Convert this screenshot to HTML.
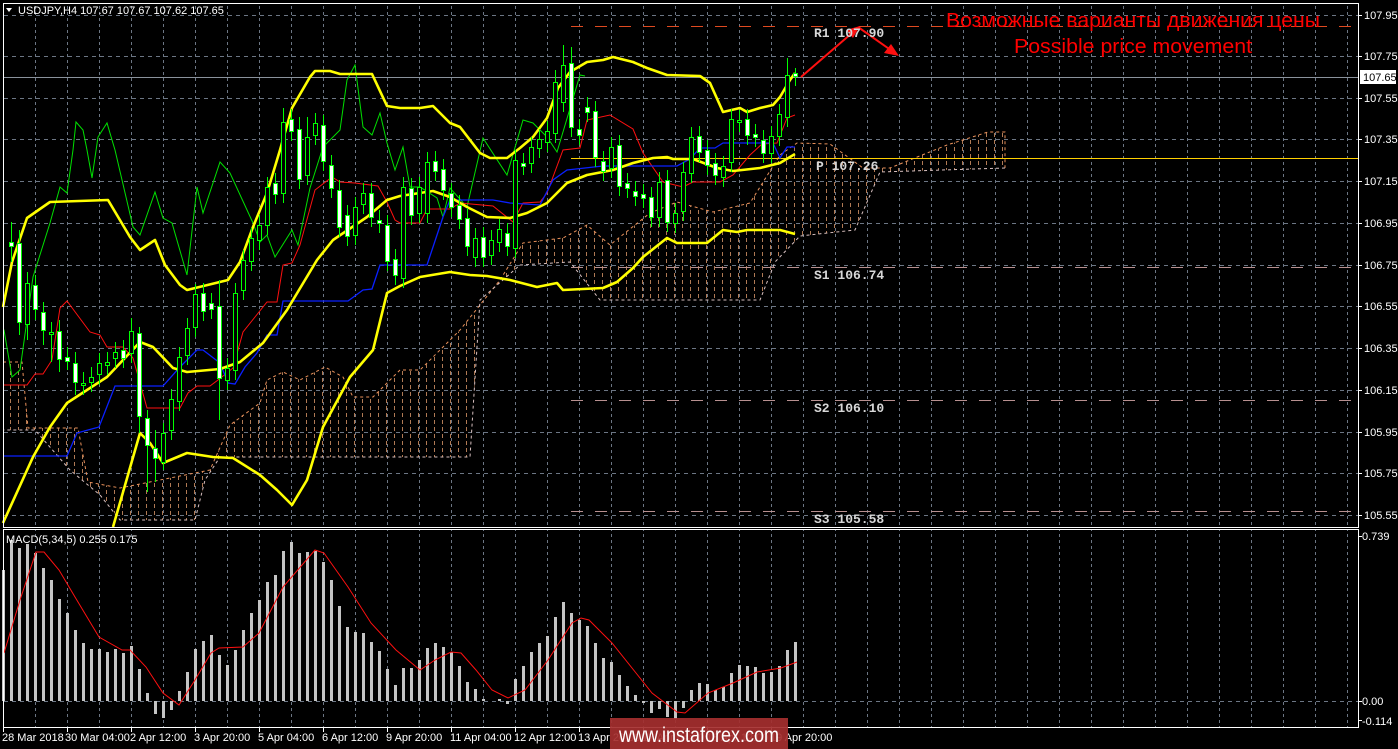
<!DOCTYPE html>
<html><head><meta charset="utf-8"><style>
html,body{margin:0;padding:0;background:#000;width:1398px;height:749px;overflow:hidden}
svg{display:block}
text{font-family:"Liberation Sans",sans-serif}
</style></head><body>
<svg width="1398" height="749" viewBox="0 0 1398 749" xmlns="http://www.w3.org/2000/svg">
<defs>
<pattern id="vg" x="3" y="0" width="32" height="6" patternUnits="userSpaceOnUse">
<rect x="0" y="0" width="1" height="3" fill="#6c7684"/></pattern>
<pattern id="hatch" x="0" y="0" width="8" height="7" patternUnits="userSpaceOnUse">
<rect x="2" y="0" width="1" height="4" fill="#b07a55"/></pattern>
</defs>
<rect width="1398" height="749" fill="#000"/>
<rect x="4" y="4" width="1354" height="523" fill="url(#vg)"/>
<rect x="4" y="530" width="1354" height="197" fill="url(#vg)"/>
<g stroke="#6c7684" stroke-width="1" stroke-dasharray="4,4">
<path d="M4 15.5H1358M4 56.5H1358M4 98.5H1358M4 139.5H1358M4 181.5H1358M4 223.5H1358M4 265.5H1358M4 306.5H1358M4 348.5H1358M4 390.5H1358M4 432.5H1358M4 473.5H1358M4 515.5H1358M4 701.5H1358"/>
</g>
<polygon points="3,362 22,362 28,428 78,428 88,482 120,488 210,470 230,425 260,403 267,380 283,372 300,380 325,367 343,377 353,397 373,397 400,370 420,370 460,330 500,280 523,243 563,238 587,225 610,245 650,213 677,202 713,212 750,203 780,155 797,143 830,144 863,168 890,168 947,145 988,132 1005,132 1005,168 880,172 855,230 800,236 775,262 760,300 600,300 570,262 520,265 480,300 470,457 220,457 205,480 195,520 120,520 100,495 70,470 35,430 3,430" fill="url(#hatch)"/>
<polyline fill="none" stroke="#e8905a" stroke-width="1" stroke-dasharray="3,3" points="3,362 22,362 28,428 78,428 88,482 120,488 210,470 230,425 260,403 267,380 283,372 300,380 325,367 343,377 353,397 373,397 400,370 420,370 460,330 500,280 523,243 563,238 587,225 610,245 650,213 677,202 713,212 750,203 780,155 797,143 830,144 863,168 890,168 947,145 988,132 1005,132 1005,168"/>
<polyline fill="none" stroke="#d8c0c0" stroke-width="1" stroke-dasharray="3,3" points="1005,168 880,172 855,230 800,236 775,262 760,300 600,300 570,262 520,265 480,300 470,457 220,457 205,480 195,520 120,520 100,495 70,470 35,430 3,430"/>
<line x1="4" y1="77.5" x2="1358" y2="77.5" stroke="#8a929c" stroke-width="1"/>
<line x1="571" y1="158.5" x2="1358" y2="158.5" stroke="#ffd000" stroke-width="1"/>
<g stroke-width="1" stroke-dasharray="12,12">
<line x1="571" y1="26.5" x2="1358" y2="26.5" stroke="#e04a20"/>
<line x1="571" y1="267.5" x2="1358" y2="267.5" stroke="#b89090"/>
<line x1="571" y1="400.5" x2="1358" y2="400.5" stroke="#b89090"/>
<line x1="571" y1="511.5" x2="1358" y2="511.5" stroke="#b89090"/>
</g>
<polyline fill="none" stroke="#00e000" stroke-width="1" points="3,330 4,330 12,377 20,370 33,277 50,223 60,187 67,193 73,150 76,122 83,130 87,150 92,178 98,137 107,123 115,150 133,227 140,235 155,192 163,218 172,223 187,275 197,187 203,213 220,162 230,173 253,223 260,242 267,235 275,257 292,230 298,245 310,188 323,147 340,130 347,80 355,65 363,127 372,135 380,113 387,143 395,170 403,147 410,187 420,187 437,198 443,217 450,188 467,207 483,138 507,175 523,120 533,123 547,137 557,152 580,75 585,76"/>
<polyline fill="none" stroke="#ff1010" stroke-width="1" points="3,385 27,385 35,374 43,374 52,360 60,308 67,301 90,332 100,335 107,347 123,347 133,358 147,408 180,408 188,393 197,386 210,386 218,380 233,368 243,332 267,302 277,302 283,265 292,263 300,245 315,190 332,177 340,182 355,183 378,186 387,202 395,220 400,223 420,223 427,209 450,209 460,203 493,206 513,222 523,203 540,202 547,193 563,150 580,148 587,120 610,115 633,129 643,153 663,182 683,187 693,182 720,182 733,175 750,155 762,144 777,143 787,118 795,115"/>
<polyline fill="none" stroke="#0a20ff" stroke-width="1.3" points="3,456 67,456 77,433 99,427 115,386 163,386 180,367 197,350 203,350 220,363 228,383 235,384 245,367 257,353 267,335 277,335 283,301 348,301 363,290 372,289 380,265 427,265 443,217 450,200 493,200 510,203 540,205 553,180 567,170 603,166 677,166 690,159 700,148 715,148 723,143 773,143 780,158 787,147 795,147"/>
<g fill="none" stroke="#ffff00" stroke-width="2.6" stroke-linejoin="round">
<polyline points="3,307 12,262 27,218 50,202 108,200 130,237 140,250 155,240 165,265 180,285 187,290 228,280 240,262 253,227 267,193 280,150 292,108 310,77 315,71 330,71 340,74 372,74 387,106 400,108 420,108 433,106 450,123 460,127 480,153 490,158 507,158 520,148 533,137 547,118 558,88 570,72 587,62 603,60 613,57 633,62 647,68 667,75 700,76 710,83 723,112 740,108 747,112 760,108 773,105 780,97 790,80 795,73"/>
<polyline points="3,523 33,457 50,427 67,403 107,377 140,342 153,347 173,368 187,372 220,369 240,362 263,343 287,310 317,260 333,240 367,217 387,200 400,196 433,191 450,197 467,207 487,217 510,218 527,213 547,203 567,183 587,175 613,170 633,163 653,158 667,157 673,159 693,159 717,168 733,171 760,168 780,163 795,154"/>
<polyline points="113,527 140,433 150,443 163,463 187,453 213,457 233,458 260,475 277,490 292,505 307,480 323,427 350,377 373,350 387,293 400,286 420,277 450,272 470,275 487,276 510,280 537,287 557,283 563,290 603,288 617,282 633,268 643,257 667,238 677,243 707,243 723,230 737,232 747,230 780,230 795,234"/>
</g>
<path stroke="#00ff00" stroke-width="1" fill="none" d="M11.5 222V262M19.5 230V335M27.5 272V340M35.5 275V320M43.5 302V345M51.5 322V362M59.5 320V372M67.5 347V370M75.5 352V395M83.5 372V395M91.5 367V392M99.5 353V385M107.5 352V375M115.5 342V368M123.5 340V368M131.5 318V363M139.5 327V433M147.5 410V492M155.5 430V482M163.5 423V470M171.5 389V440M179.5 347V411M187.5 318V365M195.5 284V337M203.5 283V321M211.5 293V319M219.5 280V420M227.5 358V390M235.5 283V380M243.5 250V300M251.5 228V271M259.5 215V250M267.5 177V235M275.5 173V204M283.5 108V203M291.5 109V141M299.5 117V189M307.5 117V185M315.5 113V145M323.5 115V171M331.5 155V198M339.5 180V237M347.5 205V246M355.5 197V245M363.5 183V214M371.5 183V227M379.5 210V233M387.5 215V271M395.5 249V285M403.5 177V288M411.5 178V225M419.5 177V223M427.5 152V223M435.5 151V181M443.5 159V200M451.5 183V217M459.5 195V229M467.5 208V256M475.5 228V267M483.5 227V267M491.5 230V265M499.5 219V252M507.5 223V256M515.5 150V258M523.5 153V175M531.5 137V173M539.5 129V158M547.5 121V152M555.5 70V143M563.5 45V112M571.5 47V137M579.5 119V145M587.5 97V122M595.5 101V167M603.5 151V181M611.5 137V178M619.5 135V196M627.5 173V198M635.5 181V206M643.5 184V208M651.5 187V227M659.5 172V227M667.5 170V232M675.5 203V233M683.5 162V221M691.5 127V183M699.5 126V162M707.5 140V175M715.5 153V185M723.5 156V187M731.5 109V172M739.5 110V132M747.5 109V145M755.5 124V147M763.5 130V163M771.5 126V163M779.5 104V146M787.5 58V127M795.5 68V86"/>
<g fill="#000" stroke="#00ff00" stroke-width="1">
<rect x="25.5" y="283.5" width="4" height="41"/><rect x="49.5" y="332.5" width="4" height="2"/><rect x="81.5" y="383.5" width="4" height="2"/><rect x="89.5" y="377.5" width="4" height="5"/><rect x="97.5" y="363.5" width="4" height="11"/><rect x="105.5" y="362.5" width="4" height="3"/><rect x="113.5" y="352.5" width="4" height="6"/><rect x="129.5" y="331.5" width="4" height="22"/><rect x="161.5" y="433.5" width="4" height="29"/><rect x="169.5" y="399.5" width="4" height="31"/><rect x="177.5" y="357.5" width="4" height="44"/><rect x="185.5" y="328.5" width="4" height="27"/><rect x="193.5" y="294.5" width="4" height="33"/><rect x="225.5" y="368.5" width="4" height="12"/><rect x="233.5" y="293.5" width="4" height="77"/><rect x="241.5" y="260.5" width="4" height="30"/><rect x="249.5" y="238.5" width="4" height="23"/><rect x="257.5" y="225.5" width="4" height="15"/><rect x="265.5" y="187.5" width="4" height="38"/><rect x="281.5" y="122.5" width="4" height="71"/><rect x="305.5" y="137.5" width="4" height="38"/><rect x="313.5" y="123.5" width="4" height="12"/><rect x="353.5" y="207.5" width="4" height="28"/><rect x="361.5" y="193.5" width="4" height="11"/><rect x="401.5" y="187.5" width="4" height="91"/><rect x="417.5" y="187.5" width="4" height="26"/><rect x="425.5" y="162.5" width="4" height="51"/><rect x="473.5" y="238.5" width="4" height="19"/><rect x="489.5" y="240.5" width="4" height="15"/><rect x="497.5" y="229.5" width="4" height="13"/><rect x="513.5" y="160.5" width="4" height="88"/><rect x="529.5" y="147.5" width="4" height="16"/><rect x="537.5" y="139.5" width="4" height="9"/><rect x="545.5" y="131.5" width="4" height="11"/><rect x="553.5" y="82.5" width="4" height="51"/><rect x="561.5" y="65.5" width="4" height="37"/><rect x="609.5" y="147.5" width="4" height="21"/><rect x="657.5" y="182.5" width="4" height="35"/><rect x="673.5" y="213.5" width="4" height="10"/><rect x="681.5" y="172.5" width="4" height="39"/><rect x="689.5" y="137.5" width="4" height="36"/><rect x="721.5" y="166.5" width="4" height="11"/><rect x="729.5" y="119.5" width="4" height="43"/><rect x="737.5" y="120.5" width="4" height="2"/><rect x="769.5" y="136.5" width="4" height="17"/><rect x="777.5" y="114.5" width="4" height="22"/><rect x="785.5" y="75.5" width="4" height="42"/>
</g>
<g fill="#fff" stroke="#00ff00" stroke-width="1">
<rect x="9.5" y="242.5" width="4" height="4"/><rect x="17.5" y="243.5" width="4" height="79"/><rect x="33.5" y="285.5" width="4" height="24"/><rect x="41.5" y="312.5" width="4" height="18"/><rect x="57.5" y="331.5" width="4" height="28"/><rect x="65.5" y="357.5" width="4" height="4"/><rect x="73.5" y="363.5" width="4" height="19"/><rect x="121.5" y="350.5" width="4" height="8"/><rect x="137.5" y="333.5" width="4" height="83"/><rect x="145.5" y="418.5" width="4" height="27"/><rect x="153.5" y="448.5" width="4" height="10"/><rect x="201.5" y="293.5" width="4" height="18"/><rect x="209.5" y="303.5" width="4" height="6"/><rect x="217.5" y="306.5" width="4" height="72"/><rect x="273.5" y="183.5" width="4" height="11"/><rect x="289.5" y="119.5" width="4" height="12"/><rect x="297.5" y="129.5" width="4" height="50"/><rect x="321.5" y="125.5" width="4" height="36"/><rect x="329.5" y="165.5" width="4" height="23"/><rect x="337.5" y="190.5" width="4" height="37"/><rect x="345.5" y="215.5" width="4" height="21"/><rect x="369.5" y="193.5" width="4" height="24"/><rect x="377.5" y="220.5" width="4" height="3"/><rect x="385.5" y="225.5" width="4" height="36"/><rect x="393.5" y="259.5" width="4" height="16"/><rect x="409.5" y="188.5" width="4" height="27"/><rect x="433.5" y="161.5" width="4" height="10"/><rect x="441.5" y="169.5" width="4" height="21"/><rect x="449.5" y="193.5" width="4" height="14"/><rect x="457.5" y="205.5" width="4" height="14"/><rect x="465.5" y="218.5" width="4" height="28"/><rect x="481.5" y="237.5" width="4" height="20"/><rect x="505.5" y="233.5" width="4" height="13"/><rect x="521.5" y="163.5" width="4" height="3"/><rect x="569.5" y="63.5" width="4" height="64"/><rect x="577.5" y="129.5" width="4" height="6"/><rect x="585.5" y="107.5" width="4" height="5"/><rect x="593.5" y="111.5" width="4" height="46"/><rect x="601.5" y="161.5" width="4" height="10"/><rect x="617.5" y="145.5" width="4" height="41"/><rect x="625.5" y="183.5" width="4" height="5"/><rect x="633.5" y="191.5" width="4" height="5"/><rect x="641.5" y="194.5" width="4" height="4"/><rect x="649.5" y="197.5" width="4" height="20"/><rect x="665.5" y="180.5" width="4" height="42"/><rect x="697.5" y="136.5" width="4" height="16"/><rect x="705.5" y="150.5" width="4" height="15"/><rect x="713.5" y="163.5" width="4" height="12"/><rect x="745.5" y="119.5" width="4" height="16"/><rect x="753.5" y="134.5" width="4" height="3"/><rect x="761.5" y="140.5" width="4" height="13"/><rect x="793.5" y="73.5" width="4" height="3"/>
</g>
<g stroke="#ff1010" stroke-width="2" fill="#ff1010">
<line x1="801" y1="77" x2="852" y2="33"/>
<polygon points="860,26 846,30 853,38" stroke="none"/>
<line x1="858" y1="27" x2="892" y2="51"/>
<polygon points="899,56 884,53 891,44" stroke="none"/>
</g>
<g font-weight="bold" font-size="13" fill="#d8d8d8">
<text x="814" y="37" style="font-family:'Liberation Mono',monospace">R1 107.90</text>
<text x="816" y="170" style="font-family:'Liberation Mono',monospace">P 107.26</text>
<text x="814" y="279" style="font-family:'Liberation Mono',monospace">S1 106.74</text>
<text x="814" y="412" style="font-family:'Liberation Mono',monospace">S2 106.10</text>
<text x="814" y="523" style="font-family:'Liberation Mono',monospace">S3 105.58</text>
</g>
<text x="946" y="27" font-size="20" fill="#ff0000" textLength="374" lengthAdjust="spacingAndGlyphs">Возможные варианты движения цены</text>
<text x="1014" y="53" font-size="20" fill="#ff0000" textLength="238" lengthAdjust="spacingAndGlyphs">Possible price movement</text>
<g fill="#c4c4c4">
<rect x="2" y="570" width="3" height="131"/><rect x="10" y="540" width="3" height="161"/><rect x="18" y="548" width="3" height="153"/><rect x="26" y="544" width="3" height="157"/><rect x="34" y="553" width="3" height="148"/><rect x="42" y="568" width="3" height="133"/><rect x="50" y="580" width="3" height="121"/><rect x="58" y="599" width="3" height="102"/><rect x="66" y="613" width="3" height="88"/><rect x="74" y="630" width="3" height="71"/><rect x="82" y="643" width="3" height="58"/><rect x="90" y="649" width="3" height="52"/><rect x="98" y="649" width="3" height="52"/><rect x="106" y="652" width="3" height="49"/><rect x="114" y="649" width="3" height="52"/><rect x="122" y="653" width="3" height="48"/><rect x="130" y="646" width="3" height="55"/><rect x="138" y="669" width="3" height="32"/><rect x="146" y="693" width="3" height="8"/><rect x="154" y="701" width="3" height="13"/><rect x="162" y="701" width="3" height="17"/><rect x="170" y="701" width="3" height="9"/><rect x="178" y="691" width="3" height="10"/><rect x="186" y="672" width="3" height="29"/><rect x="194" y="649" width="3" height="52"/><rect x="202" y="641" width="3" height="60"/><rect x="210" y="635" width="3" height="66"/><rect x="218" y="655" width="3" height="46"/><rect x="226" y="665" width="3" height="36"/><rect x="234" y="650" width="3" height="51"/><rect x="242" y="630" width="3" height="71"/><rect x="250" y="613" width="3" height="88"/><rect x="258" y="600" width="3" height="101"/><rect x="266" y="582" width="3" height="119"/><rect x="274" y="575" width="3" height="126"/><rect x="282" y="551" width="3" height="150"/><rect x="290" y="542" width="3" height="159"/><rect x="298" y="553" width="3" height="148"/><rect x="306" y="552" width="3" height="149"/><rect x="314" y="551" width="3" height="150"/><rect x="322" y="562" width="3" height="139"/><rect x="330" y="580" width="3" height="121"/><rect x="338" y="606" width="3" height="95"/><rect x="346" y="627" width="3" height="74"/><rect x="354" y="632" width="3" height="69"/><rect x="362" y="633" width="3" height="68"/><rect x="370" y="642" width="3" height="59"/><rect x="378" y="651" width="3" height="50"/><rect x="386" y="669" width="3" height="32"/><rect x="394" y="685" width="3" height="16"/><rect x="402" y="668" width="3" height="33"/><rect x="410" y="668" width="3" height="33"/><rect x="418" y="660" width="3" height="41"/><rect x="426" y="648" width="3" height="53"/><rect x="434" y="643" width="3" height="58"/><rect x="442" y="647" width="3" height="54"/><rect x="450" y="652" width="3" height="49"/><rect x="458" y="666" width="3" height="35"/><rect x="466" y="682" width="3" height="19"/><rect x="474" y="689" width="3" height="12"/><rect x="482" y="699" width="3" height="2"/><rect x="498" y="699" width="3" height="2"/><rect x="506" y="701" width="3" height="3"/><rect x="514" y="679" width="3" height="22"/><rect x="522" y="666" width="3" height="35"/><rect x="530" y="652" width="3" height="49"/><rect x="538" y="643" width="3" height="58"/><rect x="546" y="636" width="3" height="65"/><rect x="554" y="617" width="3" height="84"/><rect x="562" y="602" width="3" height="99"/><rect x="570" y="613" width="3" height="88"/><rect x="578" y="620" width="3" height="81"/><rect x="586" y="626" width="3" height="75"/><rect x="594" y="643" width="3" height="58"/><rect x="602" y="658" width="3" height="43"/><rect x="610" y="662" width="3" height="39"/><rect x="618" y="675" width="3" height="26"/><rect x="626" y="686" width="3" height="15"/><rect x="634" y="695" width="3" height="6"/><rect x="642" y="701" width="3" height="2"/><rect x="650" y="701" width="3" height="12"/><rect x="658" y="701" width="3" height="8"/><rect x="666" y="701" width="3" height="16"/><rect x="674" y="701" width="3" height="18"/><rect x="682" y="701" width="3" height="7"/><rect x="690" y="690" width="3" height="11"/><rect x="698" y="683" width="3" height="18"/><rect x="706" y="684" width="3" height="17"/><rect x="714" y="690" width="3" height="11"/><rect x="722" y="687" width="3" height="14"/><rect x="730" y="673" width="3" height="28"/><rect x="738" y="665" width="3" height="36"/><rect x="746" y="666" width="3" height="35"/><rect x="754" y="667" width="3" height="34"/><rect x="762" y="673" width="3" height="28"/><rect x="770" y="672" width="3" height="29"/><rect x="778" y="666" width="3" height="35"/><rect x="786" y="650" width="3" height="51"/><rect x="794" y="642" width="3" height="59"/>
</g>
<polyline fill="none" stroke="#ff1010" stroke-width="1" points="4,653 20,600 36,552 44,552 59,570 75,597 99,637 122,650 130,650 146,667 163,693 179,705 195,680 211,653 219,648 243,647 259,633 283,587 315,550 324,553 348,587 371,623 396,650 420,670 435,660 451,652 461,653 476,670 492,690 508,698 525,690 548,660 572,623 581,618 589,620 612,643 636,673 652,693 677,712 685,713 708,693 733,683 757,672 781,668 797,662"/>
<g fill="none" stroke="#fff" stroke-width="1">
<rect x="3.5" y="3.5" width="1355" height="524"/>
<rect x="3.5" y="529.5" width="1355" height="198"/>
</g>
<path stroke="#fff" stroke-width="1" d="M1358 15.5h4M1358 56.5h4M1358 98.5h4M1358 139.5h4M1358 181.5h4M1358 223.5h4M1358 265.5h4M1358 306.5h4M1358 348.5h4M1358 390.5h4M1358 432.5h4M1358 473.5h4M1358 515.5h4M1358 701.5h4M1358 536.5h4M1358 720.5h4M3.5 728v4M67.5 728v4M131.5 728v4M195.5 728v4M259.5 728v4M323.5 728v4M387.5 728v4M451.5 728v4M515.5 728v4M579.5 728v4M643.5 728v4M707.5 728v4M771.5 728v4"/>
<g font-size="11" fill="#fff">
<text x="1364" y="19">107.95</text><text x="1364" y="60">107.75</text><text x="1364" y="102">107.55</text><text x="1364" y="143">107.35</text><text x="1364" y="185">107.15</text><text x="1364" y="227">106.95</text><text x="1364" y="269">106.75</text><text x="1364" y="310">106.55</text><text x="1364" y="352">106.35</text><text x="1364" y="394">106.15</text><text x="1364" y="436">105.95</text><text x="1364" y="477">105.75</text><text x="1364" y="519">105.55</text>
<text x="1362" y="540">0.739</text><text x="1362" y="705">0.00</text><text x="1362" y="725">-0.114</text>
</g>
<rect x="1360" y="70" width="36" height="14" fill="#fff"/>
<text x="1363" y="81" font-size="11" fill="#000">107.65</text>
<polygon points="6,8 12,8 9,12" fill="#fff"/>
<text x="18" y="14" font-size="11" fill="#fff">USDJPY,H4  107.67 107.67 107.62 107.65</text>
<text x="6" y="543" font-size="11" fill="#fff">MACD(5,34,5) 0.255 0.175</text>
<g font-size="11" fill="#fff">
<text x="2" y="741">28 Mar 2018</text><text x="65" y="741">30 Mar 04:00</text><text x="130" y="741">2 Apr 12:00</text><text x="194" y="741">3 Apr 20:00</text><text x="258" y="741">5 Apr 04:00</text><text x="322" y="741">6 Apr 12:00</text><text x="386" y="741">9 Apr 20:00</text><text x="450" y="741">11 Apr 04:00</text><text x="514" y="741">12 Apr 12:00</text><text x="578" y="741">13 Apr 20:00</text><text x="642" y="741">17 Apr 04:00</text><text x="706" y="741">18 Apr 12:00</text><text x="770" y="741">19 Apr 20:00</text>
</g>
<rect x="610" y="718" width="178" height="31" fill="#a52f2f" opacity="0.92"/>
<text x="699" y="742" font-size="21" fill="#fff" text-anchor="middle" textLength="160" lengthAdjust="spacingAndGlyphs">www.instaforex.com</text>
</svg>
</body></html>
